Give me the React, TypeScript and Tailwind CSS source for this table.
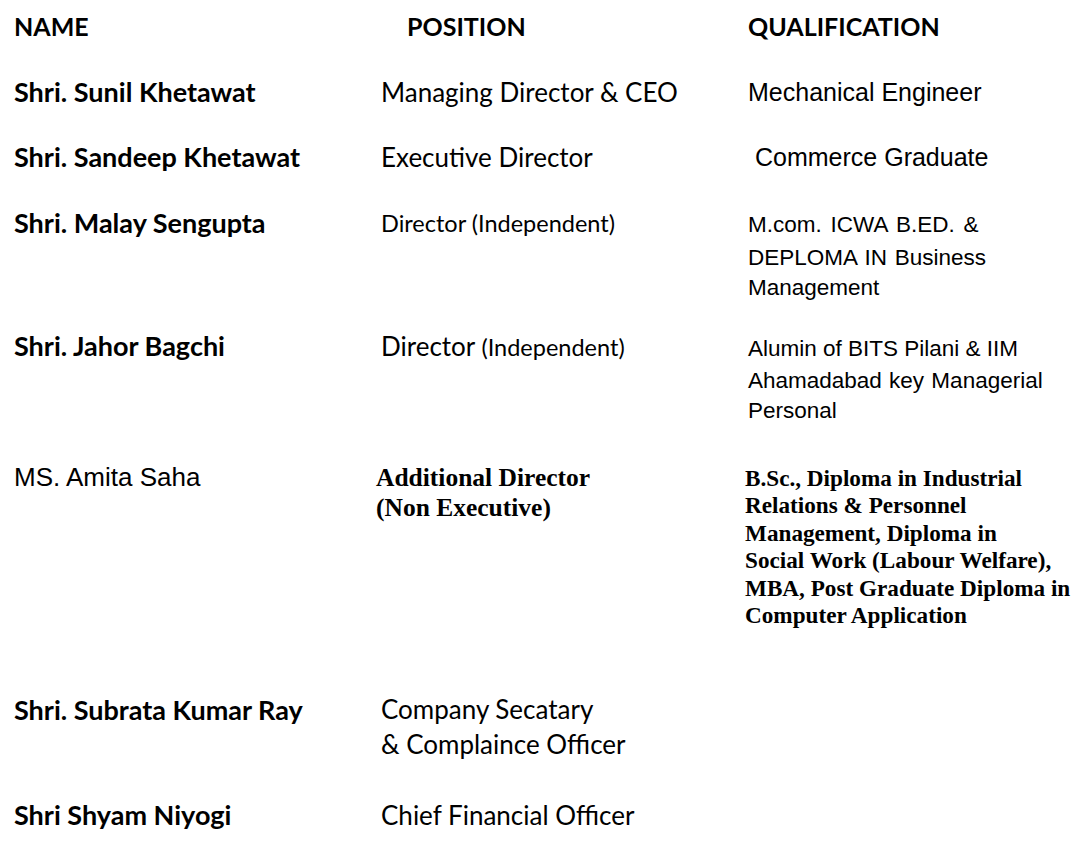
import React from "react";

const cal = "font-['Lato',sans-serif]";
const arial = "font-['Liberation_Sans',Arial,sans-serif]";
const serif = "font-['Liberation_Serif',serif]";

const name = `${cal} font-bold text-[27px] leading-[32px]`;
const pos = `${cal} text-[26px] leading-[32px]`;

export default function App() {
  return (
    <div className="w-[1086px] h-[853px] bg-white text-black overflow-hidden">
      <div className="pt-[10px] pl-[14px]">
        {/* Header */}
        <div className={`grid grid-cols-[367px_367px_1fr] h-[66px] ${cal} font-bold text-[25px] leading-[32px]`}>
          <div>NAME</div>
          <div className="pl-[26px]">POSITION</div>
          <div>QUALIFICATION</div>
        </div>
        {/* Row 1 */}
        <div className="grid grid-cols-[367px_367px_1fr] h-[65px]">
          <div className={name}>Shri. Sunil Khetawat</div>
          <div className={pos}>Managing Director &amp; CEO</div>
          <div className={`${arial} text-[25px] leading-[32px]`}>Mechanical Engineer</div>
        </div>
        {/* Row 2 */}
        <div className="grid grid-cols-[367px_367px_1fr] h-[66px]">
          <div className={name}>Shri. Sandeep Khetawat</div>
          <div className={pos}>Executive Director</div>
          <div className={`${arial} text-[25px] leading-[32px] pl-[7px]`}>Commerce Graduate</div>
        </div>
        {/* Row 3 */}
        <div className="grid grid-cols-[367px_367px_1fr] h-[123px]">
          <div className={name}>Shri. Malay Sengupta</div>
          <div className={`${cal} text-[23.5px] leading-[32px]`}>Director (Independent)</div>
          <div className={`${arial} text-[22.5px] leading-[31px] pt-[2px]`}>
            <div className="[word-spacing:2.5px]">M.com. ICWA B.ED. &amp;</div>
            <div className="[word-spacing:1.5px] leading-[29px] pt-[3px]">DEPLOMA IN Business</div>
            <div>Management</div>
          </div>
        </div>
        {/* Row 4 */}
        <div className="grid grid-cols-[367px_367px_1fr] h-[130px]">
          <div className={name}>Shri. Jahor Bagchi</div>
          <div className={pos}>
            Director <span className="text-[23.5px]">(Independent)</span>
          </div>
          <div className={`${arial} text-[22.5px] leading-[31px] pt-[3px]`}>
            <div>Alumin of BITS Pilani &amp; IIM</div>
            <div className="[word-spacing:1px] leading-[29px] pt-[2px]">Ahamadabad key Managerial</div>
            <div>Personal</div>
          </div>
        </div>
        {/* Row 5 */}
        <div className="grid grid-cols-[367px_367px_1fr] h-[234px]">
          <div className={`${arial} text-[26px] leading-[32px] pt-[1px]`}>MS. Amita Saha</div>
          <div className={`${serif} font-bold text-[25.5px] leading-[30px] -ml-[5px] pt-[3px]`}>
            <div>Additional Director</div>
            <div>(Non Executive)</div>
          </div>
          <div className={`${serif} font-bold text-[23.2px] leading-[27.4px] -ml-[3px] pt-[5px]`}>
            <div>B.Sc., Diploma in Industrial</div>
            <div>Relations &amp; Personnel</div>
            <div>Management, Diploma in</div>
            <div>Social Work (Labour Welfare),</div>
            <div>MBA, Post Graduate Diploma in</div>
            <div>Computer Application</div>
          </div>
        </div>
        {/* Row 6 */}
        <div className="grid grid-cols-[367px_367px_1fr] h-[105px]">
          <div className={name}>Shri. Subrata Kumar Ray</div>
          <div className={`${cal} text-[26px] leading-[35px] -mt-[2px]`}>
            <div>Company Secatary</div>
            <div>&amp; Complaince Officer</div>
          </div>
          <div></div>
        </div>
        {/* Row 7 */}
        <div className="grid grid-cols-[367px_367px_1fr]">
          <div className={name}>Shri Shyam Niyogi</div>
          <div className={pos}>Chief Financial Officer</div>
          <div></div>
        </div>
      </div>
    </div>
  );
}
